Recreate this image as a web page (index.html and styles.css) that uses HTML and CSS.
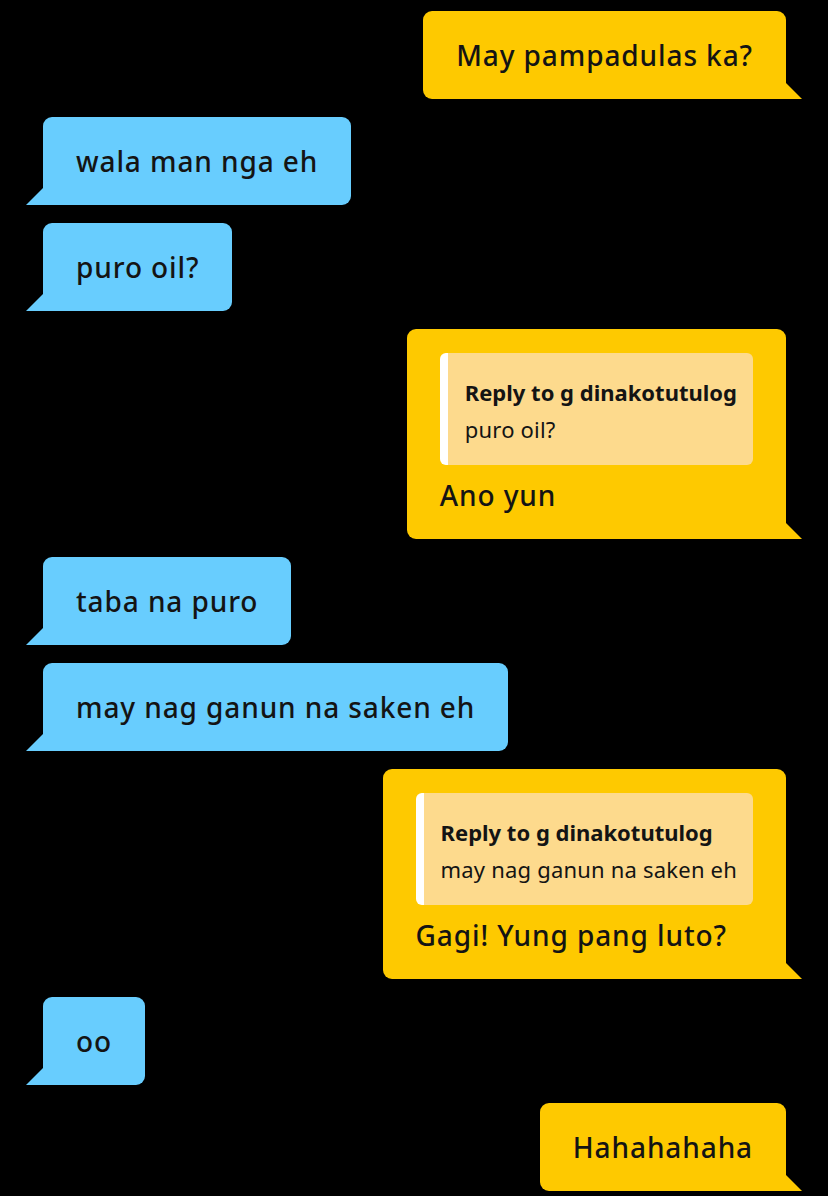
FILE: index.html
```html
<!DOCTYPE html>
<html lang="en">
<head>
    <meta charset="UTF-8">
    <meta name="viewport" content="width=device-width, initial-scale=1.0">
    <title>Chat</title>
    <link rel="stylesheet" href="styles.css">
</head>
<body>
    <div class="chat">
        <div class="msg out">May pampadulas ka?</div>
        <div class="msg in">wala man nga eh</div>
        <div class="msg in">puro oil?</div>
        <div class="msg out">
            <div class="quote">
                <div class="quote-name">Reply to g dinakotutulog</div>
                <div class="quote-text">puro oil?</div>
            </div>
            <div class="msg-text">Ano yun</div>
        </div>
        <div class="msg in">taba na puro</div>
        <div class="msg in">may nag ganun na saken eh</div>
        <div class="msg out">
            <div class="quote">
                <div class="quote-name">Reply to g dinakotutulog</div>
                <div class="quote-text">may nag ganun na saken eh</div>
            </div>
            <div class="msg-text">Gagi! Yung pang luto?</div>
        </div>
        <div class="msg in">oo</div>
        <div class="msg out">Hahahahaha</div>
    </div>
</body>
</html>
```

FILE: styles.css
```css
* {
    box-sizing: border-box;
    margin: 0;
    padding: 0;
}
html,
body {
    background: #000;
}
body {
    font-family: "Noto Sans", "Open Sans", sans-serif;
    color: #141414;
}
.chat {
    display: flex;
    flex-direction: column;
    gap: 18px;
    padding: 11px 42px 10px 43px;
}
.msg {
    position: relative;
    padding: 26px 33px;
    border-radius: 9px;
    font-size: 28px;
    font-weight: 500;
    line-height: 36px;
    letter-spacing: 0.9px;
    white-space: nowrap;
}
.msg::after {
    content: "";
    position: absolute;
    bottom: 0;
    width: 17px;
    height: 17px;
}
.in {
    align-self: flex-start;
    background: #68cdfe;
    border-bottom-left-radius: 0;
}
.in::after {
    left: -17px;
    background: #68cdfe;
    clip-path: polygon(100% 0, 100% 100%, 0 100%);
}
.out {
    align-self: flex-end;
    background: #fec900;
    border-bottom-right-radius: 0;
}
.out::after {
    right: -16px;
    width: 16px;
    height: 16px;
    background: #fec900;
    clip-path: polygon(0 0, 100% 100%, 0 100%);
}
.msg-text {
    margin-top: 12px;
}
.quote {
    background: #fdda8d;
    border-left: 8px solid #fff;
    border-radius: 6px;
    padding: 21px 16px 17px 17px;
    font-size: 22px;
    font-weight: 400;
    line-height: 37px;
    letter-spacing: 0.2px;
}
.quote-name {
    font-weight: 700;
    letter-spacing: 0;
}
.msg:has(.quote) {
    padding-top: 24px;
}
```
